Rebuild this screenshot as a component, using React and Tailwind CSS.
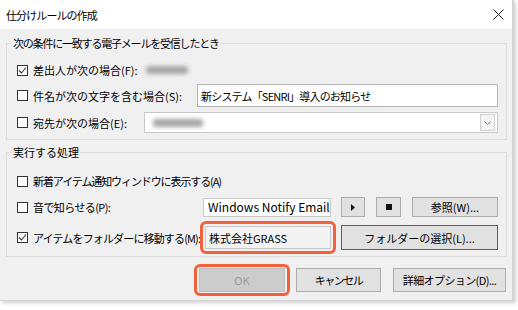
import React from 'react'

const font = "[font-family:'Noto_Sans_CJK_JP','Noto_Sans',sans-serif]"

function Check({ checked }) {
  return (
    <span className="flex h-[11px] w-[11px] shrink-0 items-center justify-center border border-[#333] bg-white">
      {checked && (
        <svg width="9" height="9" viewBox="0 0 9 9">
          <polyline points="1,4.5 3.5,7 8,1.5" fill="none" stroke="#333" strokeWidth="1.1" />
        </svg>
      )}
    </span>
  )
}

// labelW keeps the controls on the right at a fixed x, whatever the text width
function Row({ checked, label, labelW = '', tight = '', className = '', children }) {
  return (
    <div className={`flex items-center ${className}`}>
      <Check checked={checked} />
      <span className={`ml-[5px] shrink-0 whitespace-nowrap ${labelW} ${tight}`}>{label}</span>
      {children}
    </div>
  )
}

function Btn({ className = '', children }) {
  return (
    <div className={`flex shrink-0 items-center justify-center border bg-[#e1e1e1] ${className}`}>
      {children}
    </div>
  )
}

// masked (blurred) address
function Masked({ className = '' }) {
  return <span className={`h-[8px] rounded-[3px] bg-[#a6a6a6] blur-[2px] ${className}`} />
}

export default function App() {
  return (
    <div className={`h-[310px] w-[518px] overflow-hidden bg-white text-[11px] leading-[16px] text-black ${font}`}>
      <div className="flex h-[301px] w-[514px] flex-col border-r-2 border-b border-[#d4d4d4] bg-[#f0f0f0] shadow-[2px_2px_4px_rgba(0,0,0,0.18)]">
        {/* title bar */}
        <div className="flex h-[29px] items-center justify-between bg-white pl-[6px] pr-[8px]">
          <span className="tracking-[-0.9px]">仕分けルールの作成</span>
          <svg width="11" height="11" viewBox="0 0 11 11">
            <path d="M0.5 0.5 L10.5 10.5 M10.5 0.5 L0.5 10.5" stroke="#222" strokeWidth="1" />
          </svg>
        </div>

        <div className="flex flex-1 flex-col px-[6px] pt-[6px]">
          <fieldset className="flex h-[105px] flex-col border border-[#dcdcdc] pl-[10px] pr-[8px]">
            <legend className="ml-[-5px] px-[1px] tracking-[-1.2px]">次の条件に一致する電子メールを受信したとき</legend>
            <Row checked label="差出人が次の場合(F):" className="mt-[7px] h-[24px]">
              <Masked className="ml-[8px] w-[42px]" />
            </Row>
            <Row label="件名が次の文字を含む場合(S):" labelW="w-[164px]" className="mt-[2px] h-[23px]">
              <div className="flex h-[23px] w-[301px] items-center border border-[#b4b4b4] bg-white px-[3px] tracking-[-0.8px]">
                新システム「SENRI」導入のお知らせ
              </div>
            </Row>
            <Row label="宛先が次の場合(E):" labelW="w-[111px]" className="mt-[5px] h-[21px]">
              <div className="flex h-[21px] w-[354px] items-center border border-[#c8c8c8] bg-white">
                <Masked className="ml-[8px] w-[50px]" />
                <span className="ml-auto mr-[2px] flex h-[17px] w-[15px] items-center justify-center border border-[#d0d0d0] bg-[#f4f4f4]">
                  <svg width="7" height="4" viewBox="0 0 7 4">
                    <polyline points="0.5,0.5 3.5,3.5 6.5,0.5" fill="none" stroke="#777" strokeWidth="1" />
                  </svg>
                </span>
              </div>
            </Row>
          </fieldset>

          <fieldset className="mt-[4px] flex h-[113px] flex-col border border-[#dcdcdc] pl-[10px] pr-[8px]">
            <legend className="ml-[-5px] px-[1px]">実行する処理</legend>
            <Row label="新着アイテム通知ウィンドウに表示する(A)" tight="tracking-[-1.1px]" className="mt-[11px] h-[20px]" />
            <Row label="音で知らせる(P):" labelW="w-[170px]" tight="tracking-[-0.6px]" className="mt-[6px] h-[20px]">
              <div className="flex h-[19px] w-[128px] shrink-0 items-center overflow-hidden whitespace-nowrap border border-[#c8c8c8] bg-white px-[4px] text-[12px]">
                Windows Notify Email
              </div>
              <Btn className="ml-[10px] h-[20px] w-[24px] border-[#adadad]">
                <svg width="4" height="7" viewBox="0 0 4 7"><polygon points="0,0 4,3.5 0,7" fill="#111" /></svg>
              </Btn>
              <Btn className="ml-[11px] h-[20px] w-[25px] border-[#adadad]">
                <span className="h-[6px] w-[6px] bg-[#111]" />
              </Btn>
              <Btn className="ml-[11px] h-[20px] w-[86px] border-[#adadad]">参照(W)...</Btn>
            </Row>
            <Row checked label="アイテムをフォルダーに移動する(M):" labelW="w-[167px]" tight="tracking-[-0.85px]" className="mt-[3px] h-[35px]">
              <div className="shrink-0 rounded-[6px] border-[3px] border-[#f2603c] p-[2px]">
                <div className="flex h-[23px] w-[126px] items-center border border-[#c8c8c8] bg-[#f3f3f3] px-[3px]">
                  株式会社GRASS
                </div>
              </div>
              <Btn className="ml-[5px] h-[25px] w-[157px] border-[#0078d7]">フォルダーの選択(L)...</Btn>
            </Row>
          </fieldset>

          <div className="mt-[7px] flex items-center justify-end">
            <div className="rounded-[6px] border-[3px] border-[#f2603c] px-[2px] py-[1px]">
              <div className="flex h-[24px] w-[86px] items-center justify-center border border-[#bfbfbf] bg-[#cccccc] text-[#9a9a9a]">OK</div>
            </div>
            <Btn className="ml-[6px] h-[24px] w-[85px] border-[#adadad] tracking-[-1.5px]">キャンセル</Btn>
            <Btn className="ml-[12px] h-[24px] w-[113px] border-[#adadad] tracking-[-0.6px]">詳細オプション(D)...</Btn>
          </div>
        </div>
      </div>
    </div>
  )
}
